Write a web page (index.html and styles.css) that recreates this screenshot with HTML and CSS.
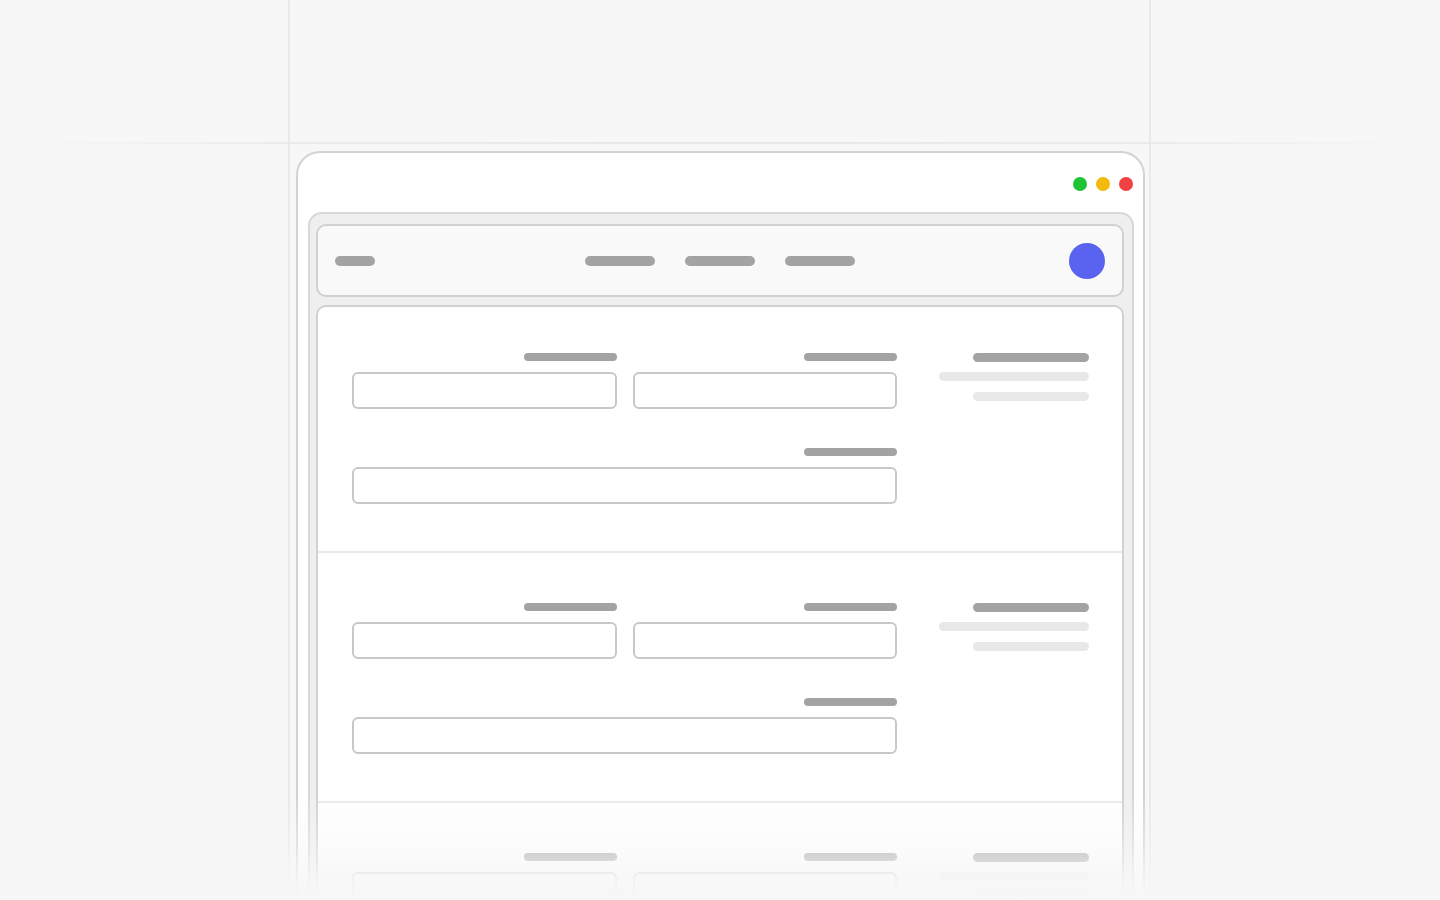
FILE: index.html
```html
<!DOCTYPE html>
<html lang="en">
<head>
<meta charset="utf-8">
<title>Form wireframe</title>
<link rel="stylesheet" href="styles.css">
</head>
<body>
<div class="stage">
  <div class="guide guide-h"></div>
  <div class="guide guide-v guide-left"></div>
  <div class="guide guide-v guide-right"></div>

  <div class="window">
    <div class="titlebar">
      <span class="dot dot-green"></span>
      <span class="dot dot-yellow"></span>
      <span class="dot dot-red"></span>
    </div>
    <div class="frame">
      <header class="nav">
        <span class="pill logo"></span>
        <nav class="nav-links">
          <span class="pill link"></span>
          <span class="pill link"></span>
          <span class="pill link"></span>
        </nav>
        <span class="avatar"></span>
      </header>

      <main class="card">
        <section class="section">
          <div class="form">
            <div class="field"><span class="label"></span><span class="input"></span></div>
            <div class="field"><span class="label"></span><span class="input"></span></div>
            <div class="field wide"><span class="label"></span><span class="input"></span></div>
          </div>
          <aside class="aside">
            <span class="a-title"></span>
            <span class="a-line long"></span>
            <span class="a-line"></span>
          </aside>
        </section>
        <section class="section">
          <div class="form">
            <div class="field"><span class="label"></span><span class="input"></span></div>
            <div class="field"><span class="label"></span><span class="input"></span></div>
            <div class="field wide"><span class="label"></span><span class="input"></span></div>
          </div>
          <aside class="aside">
            <span class="a-title"></span>
            <span class="a-line long"></span>
            <span class="a-line"></span>
          </aside>
        </section>
        <section class="section">
          <div class="form">
            <div class="field"><span class="label"></span><span class="input"></span></div>
            <div class="field"><span class="label"></span><span class="input"></span></div>
            <div class="field wide"><span class="label"></span><span class="input"></span></div>
          </div>
          <aside class="aside">
            <span class="a-title"></span>
            <span class="a-line long"></span>
            <span class="a-line"></span>
          </aside>
        </section>
      </main>
    </div>
  </div>

  <div class="fade"></div>
</div>
</body>
</html>
```

FILE: styles.css
```css
* { box-sizing: border-box; }

html, body {
  margin: 0;
  padding: 0;
  height: 100%;
  background: #f7f7f7;
  font-family: "Inter", "Liberation Sans", sans-serif;
  overflow: hidden;
}

.stage {
  position: relative;
  width: 1440px;
  height: 900px;
  overflow: hidden;
  padding-top: 151px;
  padding-left: 296px;
}

/* decorative guide lines */
.guide { position: absolute; pointer-events: none; }
.guide-h {
  top: 142px;
  left: 0;
  right: 0;
  height: 2px;
  background: linear-gradient(90deg, rgba(232,232,232,0) 2%, #ebebeb 20%, #e8e8e8 50%, #ebebeb 80%, rgba(232,232,232,0) 98%);
}
.guide-v {
  top: 0;
  bottom: 0;
  width: 2px;
  background: #e9e9e9;
}
.guide-left { left: 288px; }
.guide-right { left: 1149px; }

/* window */
.window {
  position: relative;
  width: 849px;
  height: 820px;
  background: #ffffff;
  border: 2px solid #d3d3d3;
  border-bottom: none;
  border-radius: 24px 24px 0 0;
  padding: 0 9px 0 10px;
}

.titlebar {
  height: 59px;
  display: flex;
  justify-content: flex-end;
  align-items: flex-start;
  gap: 9px;
  padding-top: 24px;
  padding-right: 1px;
}
.dot {
  width: 14px;
  height: 14px;
  border-radius: 50%;
}
.dot-green { background: #1fc336; }
.dot-yellow { background: #f5b80c; }
.dot-red { background: #f24141; }

.frame {
  height: 760px;
  background: #efefef;
  border: 2px solid #d8d8d8;
  border-bottom: none;
  border-radius: 14px 14px 0 0;
  padding: 10px 8px 0 6px;
  display: flex;
  flex-direction: column;
  gap: 8px;
}

.nav {
  height: 73px;
  flex: none;
  background: #f9f9f9;
  border: 2px solid #d1d1d1;
  border-radius: 10px;
  display: flex;
  align-items: center;
  justify-content: space-between;
  padding: 0 17px;
  position: relative;
}
.pill {
  display: block;
  height: 10px;
  border-radius: 5px;
  background: #a3a3a3;
}
.logo { width: 40px; }
.nav-links {
  display: flex;
  gap: 30px;
  position: absolute;
  left: 50%;
  transform: translateX(-50%);
}
.link { width: 70px; }
.avatar {
  width: 36px;
  height: 36px;
  border-radius: 50%;
  background: #5a62f0;
}

.card {
  flex: 1;
  background: #ffffff;
  border: 2px solid #d1d1d1;
  border-bottom: none;
  border-radius: 10px 10px 0 0;
}

.section {
  display: grid;
  grid-template-columns: 545px 150px;
  column-gap: 42px;
  align-items: start;
  padding: 50px 0 47px 34px;
  border-top: 2px solid #eaeaea;
}
.section:first-child {
  border-top: none;
  padding-top: 46px;
}

.form {
  display: grid;
  grid-template-columns: 1fr 1fr;
  column-gap: 16px;
  row-gap: 39px;
}
.field {
  display: flex;
  flex-direction: column;
  align-items: flex-end;
}
.field.wide { grid-column: 1 / 3; }
.label {
  display: block;
  width: 93px;
  height: 8px;
  border-radius: 4px;
  background: #a3a3a3;
  margin-bottom: 11px;
}
.input {
  display: block;
  width: 100%;
  height: 37px;
  border: 2px solid #c8c8c8;
  border-radius: 6px;
  background: #ffffff;
}

.aside {
  display: flex;
  flex-direction: column;
  align-items: flex-end;
}
.a-title {
  display: block;
  width: 116px;
  height: 9px;
  border-radius: 5px;
  background: #a3a3a3;
}
.a-line {
  display: block;
  width: 116px;
  height: 9px;
  border-radius: 5px;
  background: #e8e8e8;
  margin-top: 11px;
}
.a-line.long { width: 150px; margin-top: 10px; }

/* bottom fade overlay */
.fade {
  position: absolute;
  left: 0;
  right: 0;
  bottom: 0;
  height: 104px;
  background: linear-gradient(180deg, rgba(247,247,247,0) 0%, rgba(247,247,247,0.45) 48%, rgba(247,247,247,0.93) 85%, #f7f7f7 100%);
  pointer-events: none;
}
```
